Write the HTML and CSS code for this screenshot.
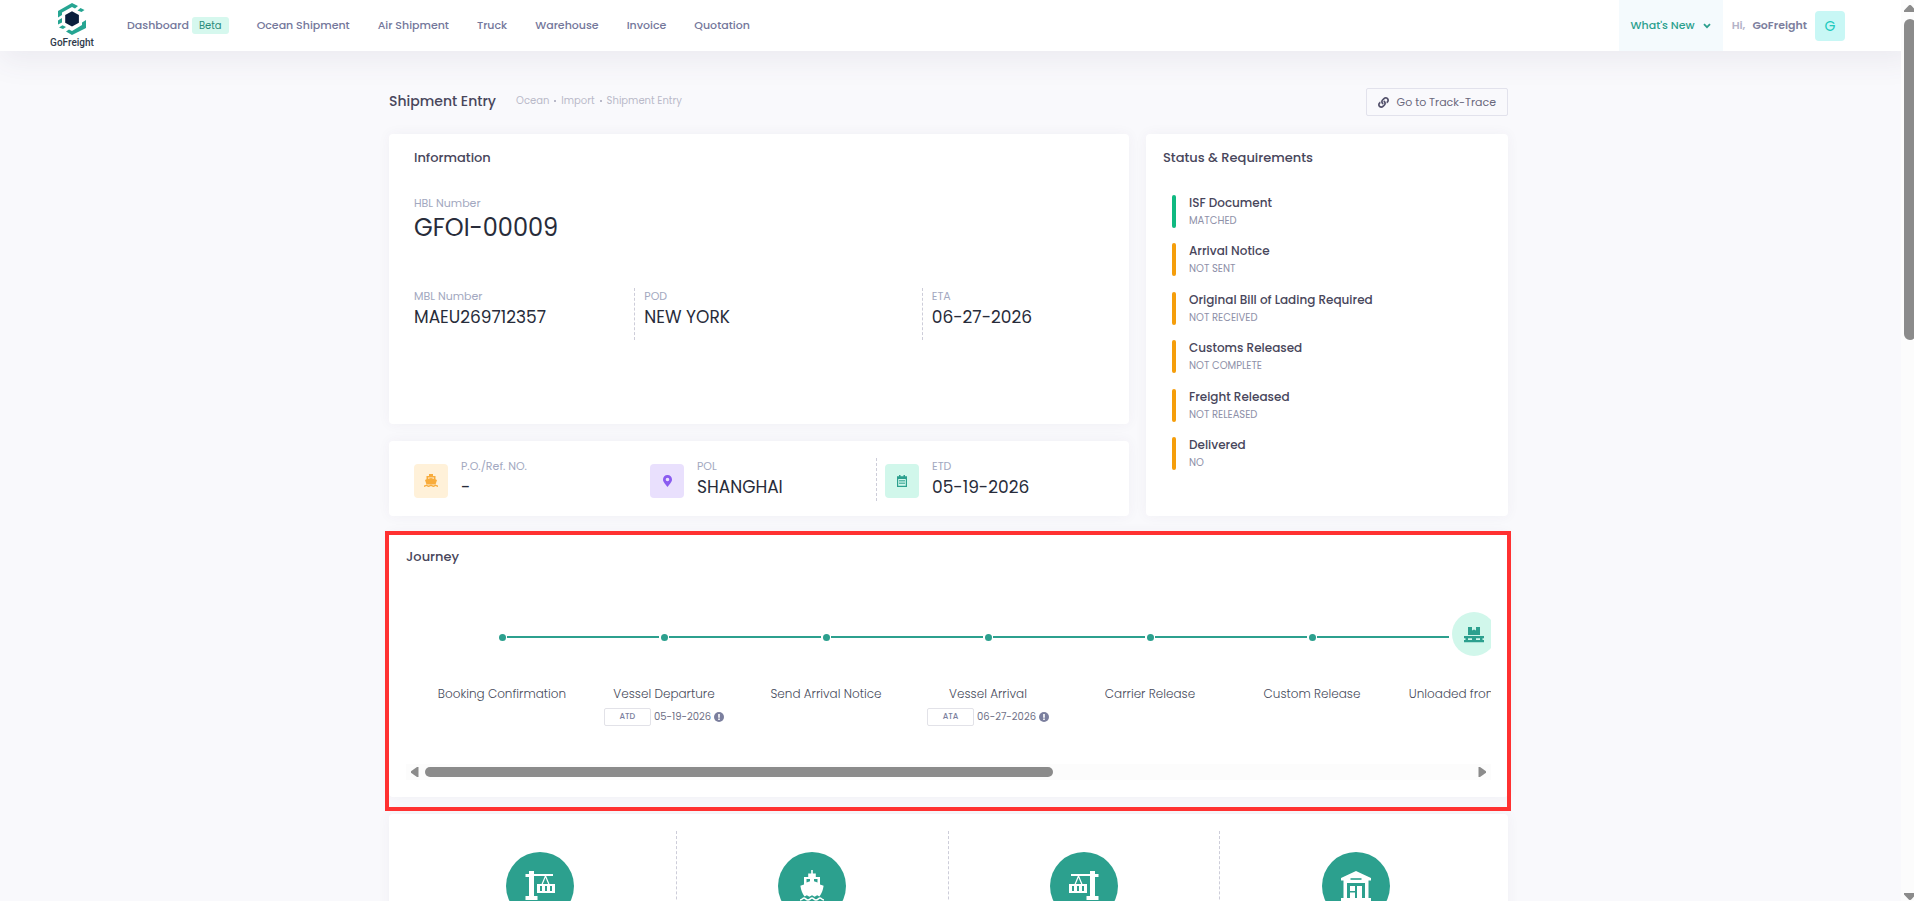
FILE: index.html
```html
<!DOCTYPE html>
<html lang="en">
  <head>
    <meta charset="utf-8">
    <title>GoFreight - Shipment Entry</title>
    <link rel="stylesheet" href="styles.css">
  </head>
  <body>
    <header class="header">
      <a href="#" class="logo">
        <svg width="28" height="32" viewBox="0 0 28 32">
          <g fill="#26a592">
            <path d="M0 8 14 0l6 3-3 2.500-3-1.500L4 9.500V12l-4 2.500z"/>
            <path d="M19.500 7.500 22.500 5l4 2-3 2z"/>
            <path d="M28 17v8l-14 7-6-3.500 3-2 3 1.500 10-6v-2.500z"/>
            <path d="M0 17.500 4 15v4.500l-4 2z"/>
            <path d="M1 24.500 4.500 22.300 8 24l-3 2z"/>
          </g>
          <path fill="#0a1f3d" d="M14 8.200 20.900 12v7.800L14 23.500l-6.800-3.700V12z"/>
        </svg>
        <span>GoFreight</span>
      </a>
      <nav class="nav">
        <a href="#">Dashboard <span class="beta">Beta</span></a>
        <a href="#">Ocean Shipment</a>
        <a href="#">Air Shipment</a>
        <a href="#">Truck</a>
        <a href="#">Warehouse</a>
        <a href="#">Invoice</a>
        <a href="#">Quotation</a>
      </nav>
      <button type="button" class="whats-new">
        What's New
        <svg width="8" height="6" viewBox="0 0 8 6"><path d="M1 1.200 4 4.200 7 1.200" fill="none" stroke="#2ca08e" stroke-width="1.800"/></svg>
      </button>
      <div class="user">
        <span class="hi">Hi,</span>
        <span class="user-name">GoFreight</span>
        <span class="avatar">G</span>
      </div>
    </header>

    <main class="main">
      <div class="container">
        <div class="subheader">
          <h1>Shipment Entry</h1>
          <div class="breadcrumbs">
            <a href="#">Ocean</a><i></i><a href="#">Import</a><i></i><a href="#">Shipment Entry</a>
          </div>
          <a href="#" class="track-btn">
            <svg width="11" height="11" viewBox="0 0 512 512"><path fill="#53516b" d="M326.612 185.391c59.747 59.809 58.927 155.698.36 214.590-.110.120-.240.250-.360.370l-67.200 67.200c-59.270 59.270-155.699 59.262-214.960 0-59.270-59.260-59.270-155.700 0-214.960l37.106-37.106c9.840-9.840 26.786-3.300 27.294 10.606.648 17.722 3.826 35.527 9.690 52.721 1.986 5.822.567 12.262-3.783 16.612l-13.087 13.087c-28.026 28.026-28.905 73.660-1.155 101.960 28.024 28.579 74.086 28.749 102.325.510l67.200-67.190c28.191-28.191 28.073-73.757 0-101.830-3.701-3.694-7.429-6.564-10.341-8.569a16.037 16.037 0 0 1-6.947-12.606c-.396-10.567 3.348-21.456 11.698-29.806l21.054-21.055c5.521-5.521 14.182-6.199 20.584-1.731a152.482 152.482 0 0 1 20.522 17.197zM467.547 44.449c-59.261-59.262-155.690-59.270-214.960 0l-67.200 67.200c-.120.120-.250.250-.360.370-58.566 58.892-59.387 154.781.360 214.590a152.454 152.454 0 0 0 20.521 17.196c6.402 4.468 15.064 3.789 20.584-1.731l21.054-21.055c8.350-8.350 12.094-19.239 11.698-29.806a16.037 16.037 0 0 0-6.947-12.606c-2.912-2.005-6.640-4.875-10.341-8.569-28.073-28.073-28.191-73.639 0-101.830l67.200-67.190c28.239-28.239 74.300-28.069 102.325.510 27.750 28.300 26.872 73.934-1.155 101.960l-13.087 13.087c-4.350 4.350-5.769 10.790-3.783 16.612 5.864 17.194 9.042 34.999 9.690 52.721.509 13.906 17.454 20.446 27.294 10.606l37.106-37.106c59.271-59.259 59.271-155.699.001-214.959z"/></svg>
            Go to Track-Trace
          </a>
        </div>

        <div class="top-grid">
          <section class="card info">
            <h2>Information</h2>
            <div class="field hbl">
              <div class="label">HBL Number</div>
              <div class="value value-lg">GFOI-00009</div>
            </div>
            <div class="info-row">
              <div class="field">
                <div class="label">MBL Number</div>
                <div class="value">MAEU269712357</div>
              </div>
              <div class="field divided">
                <div class="label">POD</div>
                <div class="value">NEW YORK</div>
              </div>
              <div class="field divided">
                <div class="label">ETA</div>
                <div class="value">06-27-2026</div>
              </div>
            </div>
          </section>

          <section class="card refs">
            <div class="ref">
              <span class="ref-icon orange">
                <svg width="14" height="14" viewBox="0 0 14 14" fill="#f8ac3c">
                  <path d="M5 0h4v2h2.500v3.200L13 6l-1.500 4.500h-9L1 6l1.500-.8V2H5zM4 3.500v1.200L7 4l3 .7V3.500z"/>
                  <path d="M0 11.500c1.500 0 2-1 2.300-1 .8 0 1 1 2.300 1S6.300 10.500 7 10.500s1.200 1 2.400 1 1.500-1 2.300-1c.4 0 .8 1 2.300 1V13c-1.200 0-1.800-.5-2.300-.9-.6.400-1.200.9-2.300.9S7.600 12.500 7 12.100c-.600.400-1.300.900-2.400.900s-1.700-.500-2.300-.900C1.800 12.500 1.200 13 0 13z"/>
                </svg>
              </span>
              <div class="field">
                <div class="label">P.O./Ref. NO.</div>
                <div class="value">-</div>
              </div>
            </div>
            <div class="ref">
              <span class="ref-icon purple">
                <svg width="9" height="12" viewBox="0 0 9 12"><path fill="#8a5cf0" fill-rule="evenodd" d="M4.500 0A4.400 4.400 0 0 1 9 4.400C9 6.500 8 7.300 4.500 12 1 7.300 0 6.500 0 4.400A4.400 4.400 0 0 1 4.500 0zm0 2.700a1.800 1.800 0 1 0 0 3.600 1.800 1.800 0 0 0 0-3.600z"/></svg>
              </span>
              <div class="field">
                <div class="label">POL</div>
                <div class="value">SHANGHAI</div>
              </div>
            </div>
            <div class="ref divided">
              <span class="ref-icon green">
                <svg width="10" height="12" viewBox="0 0 10 12"><path fill="#2ca08e" fill-rule="evenodd" d="M2 0h1.500v1.300h3V0H8v1.300h2V12H0V1.300h2zM1.200 4v6.800h7.600V4zM2.300 5h1.400v1.500H2.300zm2 0h1.400v1.500H4.300zm2 0h1.400v1.500H6.300zm-4 2.600h1.400v1.500H2.300zm2 0h1.400v1.500H4.300zm2 0h1.400v1.500H6.300z"/></svg>
              </span>
              <div class="field">
                <div class="label">ETD</div>
                <div class="value">05-19-2026</div>
              </div>
            </div>
          </section>

          <section class="card status">
            <h2>Status &amp; Requirements</h2>
            <ul class="status-list">
              <li class="done"><b>ISF Document</b><span>MATCHED</span></li>
              <li><b>Arrival Notice</b><span>NOT SENT</span></li>
              <li><b>Original Bill of Lading Required</b><span>NOT RECEIVED</span></li>
              <li><b>Customs Released</b><span>NOT COMPLETE</span></li>
              <li><b>Freight Released</b><span>NOT RELEASED</span></li>
              <li><b>Delivered</b><span>NO</span></li>
            </ul>
          </section>
        </div>

        <section class="card journey">
          <h2>Journey</h2>
          <ol class="timeline">
            <li><div class="track"><i class="dot"></i></div><div class="step-name">Booking Confirmation</div></li>
            <li>
              <div class="track"><i class="dot"></i></div>
              <div class="step-name">Vessel Departure</div>
              <div class="step-date">
                <span class="tag">ATD</span>05-19-2026
                <svg width="10" height="10" viewBox="0 0 10 10"><circle cx="5" cy="5" r="5" fill="#7b7f9e"/><path d="M4.200 2h1.600v3.800H4.200zM4.200 6.600h1.600V8H4.200z" fill="#fff"/></svg>
              </div>
            </li>
            <li><div class="track"><i class="dot"></i></div><div class="step-name">Send Arrival Notice</div></li>
            <li>
              <div class="track"><i class="dot"></i></div>
              <div class="step-name">Vessel Arrival</div>
              <div class="step-date">
                <span class="tag">ATA</span>06-27-2026
                <svg width="10" height="10" viewBox="0 0 10 10"><circle cx="5" cy="5" r="5" fill="#7b7f9e"/><path d="M4.200 2h1.600v3.800H4.200zM4.200 6.600h1.600V8H4.200z" fill="#fff"/></svg>
              </div>
            </li>
            <li><div class="track"><i class="dot"></i></div><div class="step-name">Carrier Release</div></li>
            <li class="before-current"><div class="track"><i class="dot"></i></div><div class="step-name">Custom Release</div></li>
            <li class="current">
              <div class="track">
                <span class="current-icon">
                  <svg width="20" height="20" viewBox="0 0 20 20" fill="#2ca08e">
                    <path d="M4 3h4v3.500l2-1 2 1V3h4v8H4z"/>
                    <path d="M0 12h20v2.200h-1.500V16H20v2.200H0V16h1.500v-1.800H0zm4 2.200V16h4v-1.800zm8 0V16h4v-1.800z" fill-rule="evenodd"/>
                  </svg>
                </span>
              </div>
              <div class="step-name">Unloaded from Vessel</div>
            </li>
          </ol>
          <div class="h-scroll">
            <svg width="8" height="10" viewBox="0 0 8 10"><path fill="#8b8b8b" d="M7.500 0v10H6L.3 6a1.300 1.300 0 0 1 0-2L6 0z"/></svg>
            <div class="h-rail"><div class="h-thumb"></div></div>
            <svg width="8" height="10" viewBox="0 0 8 10"><path fill="#8b8b8b" d="M.5 0v10H2l5.700-4a1.300 1.300 0 0 0 0-2L2 0z"/></svg>
          </div>
          <div class="highlight"></div>
        </section>

        <section class="card stages">
          <div class="stage">
            <span class="stage-icon">
              <svg width="32" height="32" viewBox="0 0 32 32" fill="#fff">
                <path d="M5 1h5v3h19v2H10v20h3.500v4H1.500v-4H5V7H1.500V4H5zM1 31h13v1H1z"/>
                <path d="M21.500 6 18 14.500M21.500 6 25 14.500" stroke="#fff" stroke-width="1.200"/>
                <path fill-rule="evenodd" d="M13 14h18v9H13zm3 2v5h2v-5zm5 0v5h2v-5zm5 0v5h2v-5z"/>
              </svg>
            </span>
          </div>
          <div class="stage">
            <span class="stage-icon">
              <svg width="32" height="32" viewBox="0 0 32 32" fill="#fff">
                <path fill-rule="evenodd" d="M15.200 0h1.600v3.500h3V7H24v7.500l3.600 1.200c-.600 4.500-2 8-4.200 10.800l-2.200-1.300-2.600 1.500-2.600-1.500-2.600 1.500-2.600-1.500-2.200 1.300C6.400 23.700 5 20.200 4.400 15.700L8 14.500V7h4.200V3.500h3zM10.500 9v3.500L14 11.300V9zm7.500 0v2.300l3.500 1.200V9z"/>
                <path d="M4 30c2.500 0 2.500-2 4-2s2 2 4 2 2.500-2 4-2 2 2 4 2 2.500-2 4-2 1.500 2 4 2" fill="none" stroke="#fff" stroke-width="1.500"/>
              </svg>
            </span>
          </div>
          <div class="stage">
            <span class="stage-icon">
              <svg width="32" height="32" viewBox="0 0 32 32" fill="#fff">
                <path d="M27 1h-5v3H3v2h19v20h-3.500v4h12v-4H27V7h3.500V4H27zM31 31H18v1h13z"/>
                <path d="M10.500 6 14 14.500M10.500 6 7 14.500" stroke="#fff" stroke-width="1.200"/>
                <path fill-rule="evenodd" d="M19 14H1v9h18zm-3 2v5h-2v-5zm-5 0v5H9v-5zm-5 0v5H4v-5z"/>
              </svg>
            </span>
          </div>
          <div class="stage">
            <span class="stage-icon">
              <svg width="32" height="32" viewBox="0 0 32 32" fill="#fff">
                <path d="M16 1 31 8v2.500h-2.500V28H31v3H1v-3h2.500V10.500H1V8z"/>
                <g fill="#2ca08e">
                  <path d="M10.500 8.200h11v1.600h-11z"/>
                  <path d="M7 13h18v15H7z"/>
                </g>
                <path d="M10 16h5v5h-5zM10 22.500h5V28h-5zM17 16h5v12h-5z"/>
              </svg>
            </span>
          </div>
        </section>
      </div>
    </main>

    <div class="v-scroll">
      <svg width="12" height="7" viewBox="0 0 12 7"><path fill="#8b8b8b" d="M0 7V5.500L4.500.800a2 2 0 0 1 3 0L12 5.500V7z"/></svg>
      <div class="v-rail"><div class="v-thumb"></div></div>
      <svg width="12" height="7" viewBox="0 0 12 7"><path fill="#8b8b8b" d="M0 0v1.500l4.500 4.700a2 2 0 0 0 3 0L12 1.500V0z"/></svg>
    </div>
  </body>
</html>
```
FILE: styles.css
```css
:root {
  --primary: #2ca08e;
  --primary-light: #d1f7eb;
  --heading: #48465b;
  --label: #a2a8c0;
  --value: #282c3a;
  --nav: #74779b;
  --divider: #cdcdd9;
  --font-family: Poppins, Inter, "Open Sans", sans-serif;
}

* {
  box-sizing: border-box;
}

body {
  margin: 0;
  height: 100vh;
  overflow: hidden;
  font-family: var(--font-family);
  font-size: 11px;
  color: var(--heading);
  background: #f9f9fc;
}

a {
  color: inherit;
  text-decoration: none;
}

h1,
h2 {
  margin: 0;
  font-size: 13px;
  line-height: 20px;
  font-weight: 500;
}

h1 {
  font-size: 14px;
}

/* Header */
.header {
  position: relative;
  display: flex;
  align-items: center;
  height: 51px;
  padding-right: 69px;
  background: #fff;
  box-shadow: 0 10px 30px rgba(82, 63, 105, 0.08);
}

.logo {
  display: flex;
  flex-direction: column;
  align-items: center;
  width: 44px;
  margin-left: 50px;
  padding-top: 2px;
  font: 500 10px/16px Roboto, sans-serif;
  color: #2f3a4a;
}

.nav {
  display: flex;
  flex: 1;
  gap: 28px;
  margin-left: 33px;
  font-weight: 500;
  color: var(--nav);
}

.nav a {
  display: flex;
  align-items: center;
  gap: 3px;
  height: 18px;
}

.beta {
  padding: 0 7px;
  border-radius: 3px;
  font-size: 10px;
  line-height: 17px;
  font-weight: 400;
  color: #2b8c7c;
  background: #d6f8ee;
}

.whats-new {
  display: flex;
  align-items: center;
  gap: 8px;
  align-self: stretch;
  padding: 0 12px;
  border: none;
  font: 500 11px var(--font-family);
  color: var(--primary);
  background: #f4fafd;
}

.user {
  display: flex;
  align-items: center;
  margin-left: 9px;
  font-weight: 600;
}

.hi {
  color: #b4b3c8;
}

.user-name {
  margin: 0 8px 0 7px;
  color: #7d7f9e;
}

.avatar {
  width: 30px;
  border-radius: 4px;
  font-size: 14px;
  line-height: 30px;
  font-weight: 400;
  text-align: center;
  color: #20c9bd;
  background: #c8f7f5;
}

/* Page */
.main {
  padding-right: 17px;
}

.container {
  max-width: 1119px;
  margin: 0 auto;
}

.subheader {
  display: flex;
  align-items: center;
  padding: 37px 0 18px;
}

.subheader h1,
.breadcrumbs {
  padding-bottom: 2px;
}

.breadcrumbs {
  display: flex;
  align-items: center;
  gap: 5px;
  margin-left: 20px;
  font-size: 10px;
  color: #b9b9c9;
}

.breadcrumbs i {
  width: 2px;
  height: 2px;
  background: #b9b9c9;
}

.track-btn {
  display: flex;
  align-items: center;
  gap: 8px;
  height: 28px;
  margin-left: auto;
  padding: 0 11px;
  border: 1px solid #e2e2ec;
  border-radius: 2px;
  color: #6a687c;
}

.card {
  border-radius: 4px;
  background: #fff;
  box-shadow: 0 0 13px rgba(82, 63, 105, 0.05);
}

.top-grid {
  display: grid;
  grid-template-columns: 740fr 362fr;
  grid-template-rows: 290px 75px;
  gap: 17px;
}

.label {
  font-size: 11px;
  line-height: 16px;
  color: var(--label);
}

.value {
  margin-top: 1px;
  font-size: 17px;
  line-height: 24px;
  color: var(--value);
}

.value-lg {
  font-size: 24px;
  line-height: 32px;
}

.divided {
  border-left: 1px dashed var(--divider);
}

/* Information */
.info {
  padding: 14px 25px;
}

.hbl {
  margin-top: 27px;
}

.info-row {
  display: grid;
  grid-template-columns: 220fr 287fr 182fr;
  margin-top: 44px;
}

.info-row .field {
  height: 52px;
}

.info-row .divided {
  padding-left: 9px;
}

.refs {
  display: grid;
  grid-template-columns: 236fr 226fr 228fr;
  grid-column: 1;
  padding: 17px 25px;
}

.ref {
  display: flex;
  align-items: center;
  gap: 13px;
}

.ref .field {
  padding-bottom: 2px;
}

.ref.divided {
  padding-left: 8px;
}

.ref-icon {
  display: flex;
  align-items: center;
  justify-content: center;
  width: 34px;
  height: 34px;
  margin-top: 3px;
  border-radius: 4px;
}

.orange { background: #fff1d9; }
.purple { background: #e9e0fd; }
.green { background: var(--primary-light); }

/* Status & Requirements */
.status {
  display: flex;
  flex-direction: column;
  grid-column: 2;
  grid-row: 1 / 3;
  padding: 14px 17px 46px;
}

.status-list {
  display: flex;
  flex: 1;
  flex-direction: column;
  justify-content: space-between;
  margin: 27px 0 0 9px;
  padding: 0;
  list-style: none;
}

.status-list li {
  display: flex;
  flex-direction: column;
  gap: 3px;
  position: relative;
  padding-left: 17px;
}

.status-list li::before {
  content: "";
  position: absolute;
  top: 0;
  bottom: 0;
  left: 0;
  width: 4px;
  border-radius: 2px;
  background: #f59e0b;
}

.status-list .done::before {
  background: #10b981;
}

.status-list b {
  font-size: 12px;
  line-height: 15px;
  font-weight: 500;
}

.status-list span {
  font-size: 10px;
  line-height: 15px;
  color: #8e90a8;
}

/* Journey */
.journey {
  position: relative;
  margin-top: 17px;
  padding: 14px 17px 17px;
}

.timeline {
  display: flex;
  height: 197px;
  margin: 0;
  padding: 45px 0 0 15px;
  overflow: hidden;
  list-style: none;
}

.timeline li {
  flex: 0 0 162px;
  text-align: center;
}

.track {
  display: flex;
  align-items: center;
  justify-content: center;
  position: relative;
  height: 50px;
}

.track::after {
  content: "";
  position: absolute;
  top: 24px;
  left: calc(50% + 5px);
  width: 152px;
  height: 2px;
  background: var(--primary);
}

.before-current .track::after {
  width: 132px;
}

.current .track::after {
  display: none;
}

.dot {
  width: 7px;
  height: 7px;
  border-radius: 50%;
  background: var(--primary);
}

.current-icon {
  display: flex;
  align-items: center;
  justify-content: center;
  width: 44px;
  height: 44px;
  margin-bottom: 6px;
  border-radius: 50%;
  background: var(--primary-light);
}

.step-name {
  margin-top: 22px;
  font-size: 12px;
  line-height: 20px;
  font-weight: 300;
  white-space: nowrap;
  color: #484c5c;
}

.step-date {
  display: flex;
  align-items: center;
  justify-content: center;
  gap: 3px;
  margin-top: 4px;
  font-size: 10px;
  line-height: 16px;
  color: #6f7187;
}

.tag {
  width: 47px;
  border: 1px solid #e2e2e8;
  border-radius: 2px;
  font-size: 8px;
  font-weight: 500;
  color: #7b7f9e;
}

.h-scroll {
  display: flex;
  align-items: center;
  gap: 6px;
  height: 16px;
  padding: 0 5px;
  background: #fcfcfc;
}

.h-rail {
  flex: 1;
}

.h-thumb {
  width: 60%;
  height: 10px;
  border-radius: 5px;
  background: #8b8b8b;
}

.highlight {
  position: absolute;
  inset: -2px -3px -14px -4px;
  border: 4px solid #ff3131;
  pointer-events: none;
}

/* Stages */
.stages {
  display: grid;
  grid-template-columns: repeat(4, 1fr);
  margin-top: 17px;
  padding: 17px 16px;
}

.stage {
  display: flex;
  justify-content: center;
  padding: 21px 0 60px;
  border-right: 1px dashed var(--divider);
}

.stage:last-child {
  border-right: none;
}

.stage-icon {
  display: flex;
  align-items: center;
  justify-content: center;
  width: 68px;
  height: 68px;
  border-radius: 50%;
  background: var(--primary);
}

/* Window scrollbar */
.v-scroll {
  display: flex;
  flex-direction: column;
  position: fixed;
  top: 0;
  right: 0;
  bottom: 0;
  width: 13px;
  padding: 5px 0 1px 3px;
  overflow: hidden;
  background: #fcfcfc;
}

.v-scroll svg {
  flex: none;
}

.v-rail {
  flex: 1;
  padding: 7px 0;
}

.v-thumb {
  width: 12px;
  height: 37%;
  border-radius: 6px;
  background: #8b8b8b;
}
```
